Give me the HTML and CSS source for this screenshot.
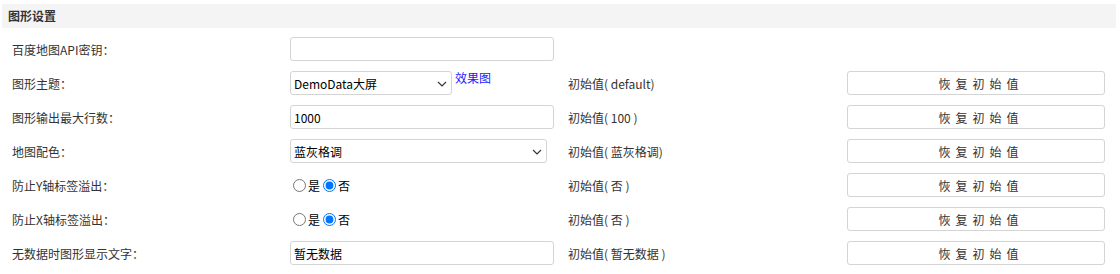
FILE: index.html
```html
<!DOCTYPE html>
<html lang="zh-CN">
<head>
    <meta charset="UTF-8">
    <title>图形设置</title>
    <link rel="stylesheet" href="styles.css">
</head>
<body>

<div class="panel">
    <div class="panel-title">图形设置</div>

    <div class="setting-row">
        <div class="label">百度地图API密钥：</div>
        <div class="field"><input type="text" class="text-input" value=""></div>
        <div class="init"></div>
        <div class="action"></div>
    </div>

    <div class="setting-row">
        <div class="label">图形主题：</div>
        <div class="field">
            <span class="select-wrap theme-select">
                <select class="select-input">
                    <option>DemoData大屏</option>
                </select>
                <svg class="select-arrow" width="10" height="6" viewBox="0 0 10 6"><path d="M1 1l4 4 4-4" fill="none" stroke="#333" stroke-width="1.1"/></svg>
            </span><a href="#" class="preview-link">效果图</a>
        </div>
        <div class="init">初始值( default)</div>
        <div class="action"><button class="reset-button">恢复初始值</button></div>
    </div>

    <div class="setting-row">
        <div class="label">图形输出最大行数：</div>
        <div class="field"><input type="text" class="text-input" value="1000"></div>
        <div class="init">初始值( 100 )</div>
        <div class="action"><button class="reset-button">恢复初始值</button></div>
    </div>

    <div class="setting-row">
        <div class="label">地图配色：</div>
        <div class="field">
            <span class="select-wrap color-select">
                <select class="select-input">
                    <option>蓝灰格调</option>
                </select>
                <svg class="select-arrow" width="10" height="6" viewBox="0 0 10 6"><path d="M1 1l4 4 4-4" fill="none" stroke="#333" stroke-width="1.1"/></svg>
            </span>
        </div>
        <div class="init">初始值( 蓝灰格调)</div>
        <div class="action"><button class="reset-button">恢复初始值</button></div>
    </div>

    <div class="setting-row">
        <div class="label">防止Y轴标签溢出：</div>
        <div class="field radios">
            <label><input type="radio" name="yOverflow">是</label>
            <label><input type="radio" name="yOverflow" checked>否</label>
        </div>
        <div class="init">初始值( 否 )</div>
        <div class="action"><button class="reset-button">恢复初始值</button></div>
    </div>

    <div class="setting-row">
        <div class="label">防止X轴标签溢出：</div>
        <div class="field radios">
            <label><input type="radio" name="xOverflow">是</label>
            <label><input type="radio" name="xOverflow" checked>否</label>
        </div>
        <div class="init">初始值( 否 )</div>
        <div class="action"><button class="reset-button">恢复初始值</button></div>
    </div>

    <div class="setting-row">
        <div class="label">无数据时图形显示文字：</div>
        <div class="field"><input type="text" class="text-input" value="暂无数据"></div>
        <div class="init">初始值( 暂无数据 )</div>
        <div class="action"><button class="reset-button">恢复初始值</button></div>
    </div>
</div>

</body>
</html>
```

FILE: styles.css
```css
body {
    margin: 0;
    background-color: #fff;
    color: #333;
    font-family: "Noto Sans CJK SC", "Noto Sans", sans-serif;
    font-size: 12px;
}
.panel {
    padding: 4px 4px 0 2px;
}
.panel-title {
    background-color: #f4f4f4;
    height: 24px;
    line-height: 24px;
    padding-left: 6px;
    font-weight: bold;
    color: #333;
    margin-bottom: 4px;
}
.setting-row {
    display: grid;
    grid-template-columns: 278px 278px 279px 258px;
    height: 34px;
    align-items: center;
    padding-left: 10px;
}
.label {
    color: #333;
}
.field {
    display: flex;
    align-items: center;
}
.text-input {
    box-sizing: border-box;
    width: 264px;
    height: 24px;
    border: 1px solid #d4d4d4;
    border-radius: 3px;
    padding: 0 3px;
    font-family: inherit;
    font-size: 12px;
    color: #000;
    outline: none;
}
.select-wrap {
    position: relative;
    display: inline-block;
    height: 24px;
}
.select-input {
    -webkit-appearance: none;
    appearance: none;
    box-sizing: border-box;
    width: 100%;
    height: 24px;
    border: 1px solid #d4d4d4;
    border-radius: 3px;
    background-color: #fff;
    font-family: inherit;
    font-size: 12px;
    color: #000;
    padding: 0 20px 0 3px;
    outline: none;
}
.select-arrow {
    position: absolute;
    right: 5px;
    top: 10px;
    pointer-events: none;
}
.theme-select {
    width: 162px;
}
.color-select {
    width: 257px;
}
.preview-link {
    color: #1a1aff;
    text-decoration: none;
    margin-left: 3px;
    align-self: flex-start;
    line-height: 14px;
}
.radios label {
    display: flex;
    align-items: center;
    color: #000;
}
.radios input[type="radio"] {
    width: 13px;
    height: 13px;
    margin: 0 2px 0 3px;
}
.init {
    color: #333;
}
.reset-button {
    box-sizing: border-box;
    width: 258px;
    height: 24px;
    border: 1px solid #d4d4d4;
    border-radius: 3px;
    background-color: #fff;
    color: #333;
    font-family: inherit;
    font-size: 12px;
    letter-spacing: 5px;
    padding: 0 0 0 10px;
    cursor: pointer;
}
.reset-button:hover {
    background-color: #f6f6f6;
}
```
